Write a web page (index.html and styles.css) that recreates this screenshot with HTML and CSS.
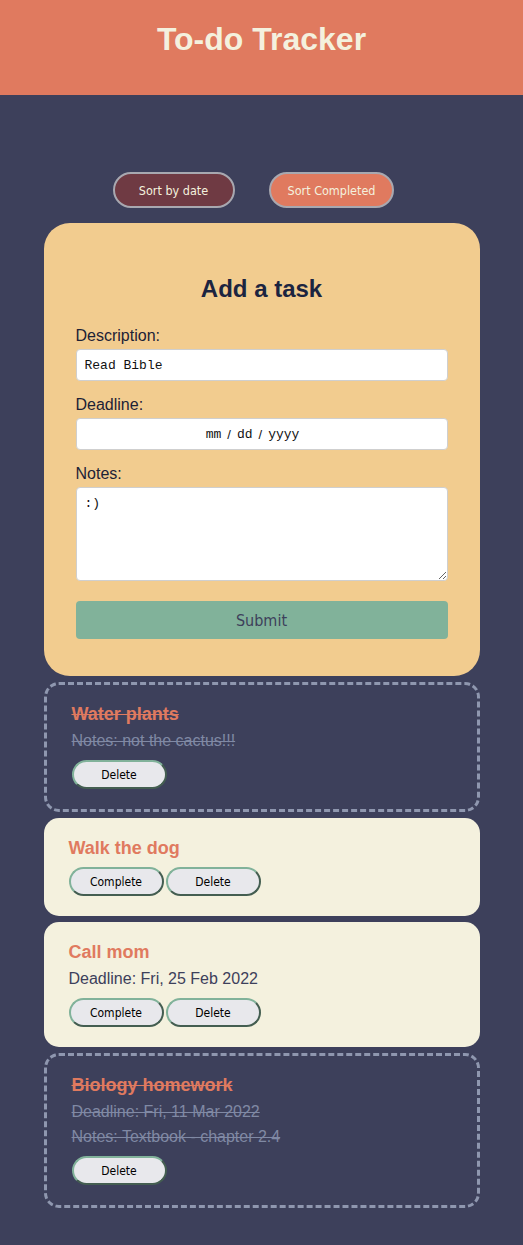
FILE: index.html
```html
<!DOCTYPE html>
<html lang="en">
<head>
<meta charset="utf-8">
<title>To-do Tracker</title>
<link rel="stylesheet" href="styles.css">
</head>
<body>
<header class="topbar">
  <h1 class="app-title">To-do Tracker</h1>
</header>
<main class="main">
  <div class="sort-row">
    <button class="sort-btn sort-date">Sort by date</button>
    <button class="sort-btn sort-completed">Sort Completed</button>
  </div>
  <div class="list">
    <form class="add-card">
      <h2 class="add-title">Add a task</h2>
      <label class="field-label" for="desc">Description:</label>
      <input class="field" id="desc" type="text" value="Read Bible">
      <label class="field-label">Deadline:</label>
      <div class="field date-field"><span class="seg">mm</span><span class="sep">/</span><span class="seg">dd</span><span class="sep">/</span><span class="seg">yyyy</span></div>
      <label class="field-label" for="notes">Notes:</label>
      <textarea class="field notes-field" id="notes">:)</textarea>
      <button type="button" class="submit-btn">Submit</button>
    </form>

    <div class="task done">
      <h3 class="task-title">Water plants</h3>
      <p class="task-text">Notes: not the cactus!!!</p>
      <div class="task-actions">
        <button class="task-btn">Delete</button>
      </div>
    </div>

    <div class="task">
      <h3 class="task-title">Walk the dog</h3>
      <div class="task-actions">
        <button class="task-btn">Complete</button>
        <button class="task-btn">Delete</button>
      </div>
    </div>

    <div class="task">
      <h3 class="task-title">Call mom</h3>
      <p class="task-text">Deadline: Fri, 25 Feb 2022</p>
      <div class="task-actions">
        <button class="task-btn">Complete</button>
        <button class="task-btn">Delete</button>
      </div>
    </div>

    <div class="task done">
      <h3 class="task-title">Biology homework</h3>
      <p class="task-text">Deadline: Fri, 11 Mar 2022</p>
      <p class="task-text">Notes: Textbook - chapter 2.4</p>
      <div class="task-actions">
        <button class="task-btn">Delete</button>
      </div>
    </div>
  </div>
</main>
</body>
</html>
```

FILE: styles.css
```css
* { box-sizing: border-box; }
html, body { margin: 0; padding: 0; }
body {
  background: #3D405B;
  font-family: "Liberation Sans", Arial, sans-serif;
  min-height: 1245px;
}
.topbar {
  background: #E07A5F;
  height: 95px;
  display: flex;
  justify-content: center;
  padding-top: 20px;
}
.app-title {
  margin: 0;
  color: #F4F1DE;
  font-size: 32px;
  line-height: 38px;
  font-weight: bold;
}
.main {
  padding-top: 77px;
  padding-bottom: 40px;
}
.sort-row {
  display: flex;
  justify-content: center;
  gap: 34px;
  padding-right: 16px;
  margin-bottom: 15px;
}
.sort-btn {
  height: 36px;
  min-width: 122px;
  padding: 0 17px;
  border-radius: 18px;
  border: 2px solid #a8a8b0;
  color: #F4F1DE;
  font-family: "DejaVu Sans Condensed", "DejaVu Sans", sans-serif;
  font-stretch: condensed;
  font-size: 12.5px;
}
.sort-date { background: #6F3A43; }
.sort-completed { background: #E07A5F; }
.list {
  width: 436px;
  margin: 0 auto;
  display: flex;
  flex-direction: column;
  gap: 6px;
}
.add-card {
  background: #F2CC8F;
  border-radius: 26px;
  padding: 52px 32px 37px;
  display: flex;
  flex-direction: column;
}
.add-title {
  margin: 0 0 24px;
  text-align: center;
  font-size: 24px;
  line-height: 28px;
  color: #1C2440;
}
.field-label {
  font-size: 16px;
  line-height: 18px;
  color: #1D2236;
  margin-bottom: 4px;
}
.field {
  width: 100%;
  height: 32px;
  border: 1px solid #cfcfcf;
  border-radius: 4px;
  background: #fff;
  font-family: "Liberation Mono", "Courier New", monospace;
  font-size: 13px;
  color: #111;
  padding: 0 8px;
  margin: 0 0 15px;
}
.date-field {
  display: flex;
  justify-content: center;
  align-items: center;
  padding-right: 26px;
}
.date-field .sep {
  font-family: "Liberation Sans", Arial, sans-serif;
  font-size: 13px;
  padding: 0 6px;
}
.notes-field {
  height: 94px;
  padding: 8px 8px;
  resize: vertical;
  margin-bottom: 20px;
}
.submit-btn {
  height: 38px;
  border: none;
  border-radius: 4px;
  background: #81B29A;
  color: #3D405B;
  font-family: "DejaVu Sans Condensed", "DejaVu Sans", sans-serif;
  font-stretch: condensed;
  font-size: 16px;
}
.task {
  background: #F4F1DE;
  border-radius: 15px;
  padding: 19px 25px 20px;
}
.task.done {
  background: transparent;
  border: 3px dashed #8F97AF;
  padding-top: 18px;
}
.task-title {
  margin: 0 0 5px;
  font-size: 18px;
  line-height: 22px;
  color: #E07A5F;
}
.task-text {
  margin: 0 0 3px;
  font-size: 16px;
  line-height: 22px;
  color: #3D405B;
}
.done .task-title { text-decoration: line-through; }
.done .task-text { color: #8089A4; text-decoration: line-through; }
.task-actions {
  display: flex;
  gap: 2px;
  margin-top: 8px;
}
.task-btn {
  width: 95px;
  height: 29px;
  border-radius: 15px;
  border: 2px outset #81B29A;
  background: #E8E8EC;
  color: #000;
  font-family: "DejaVu Sans Condensed", "DejaVu Sans", sans-serif;
  font-stretch: condensed;
  font-size: 12px;
  padding: 0;
}
```
